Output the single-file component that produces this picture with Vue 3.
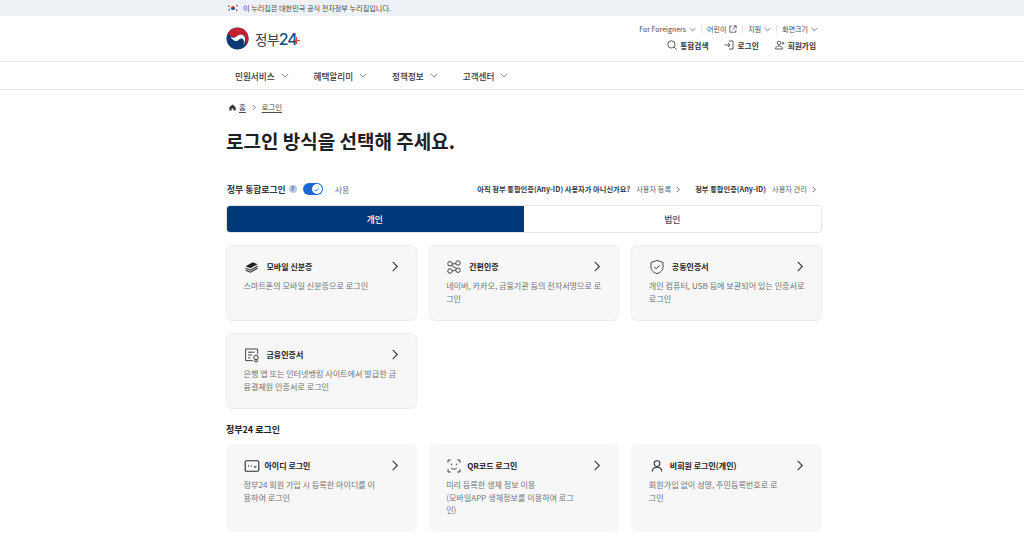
<script setup>
const identityCards = [
  { title: '모바일 신분증', desc: '스마트폰의 모바일 신분증으로 로그인', icon: 'mobile' },
  { title: '간편인증', desc: '네이버, 카카오, 금융기관 등의 전자서명으로 로그인', icon: 'link' },
  { title: '공동인증서', desc: '개인 컴퓨터, USB 등에 보관되어 있는 인증서로 로그인', icon: 'shield' },
  { title: '금융인증서', desc: '은행 앱 또는 인터넷뱅킹 사이트에서 발급한 금융결제원 인증서로 로그인', icon: 'cert' }
]
const g24Cards = [
  { title: '아이디 로그인', desc: '정부24 회원 가입 시 등록한 아이디를 이용하여 로그인', icon: 'id' },
  { title: 'QR코드 로그인', desc: '미리 등록한 생체 정보 이용\n(모바일APP 생체정보를 이용하여 로그인)', icon: 'qr' },
  { title: '비회원 로그인(개인)', desc: '회원가입 없이 성명, 주민등록번호로 로그인', icon: 'user' }
]
const navItems = ['민원서비스', '혜택알리미', '정책정보', '고객센터']
</script>

<template>
  <div class="page">
    <div class="gov-bar">
      <div class="wrap gov-inner">
        <svg class="flag" viewBox="0 0 12 8" width="12" height="8">
          <rect width="12" height="8" fill="#f7f7f7" />
          <path d="M4 4a2 2 0 0 1 4 0z" fill="#cd2e3a" />
          <path d="M4 4a2 2 0 0 0 4 0z" fill="#0047a0" />
          <path d="M1.400 1.200l1.400 1.200M1 2l1.200 1M9.200 1.200L10.600 2.400M9.600 0.900l1.200 1M1.200 6l1.400-1.200M1.700 6.700l1.400-1.200M9.200 5.200l1.400 1.200M8.800 5.800l1.200 1" stroke="#222" stroke-width=".7" />
        </svg>
        <span>이 누리집은 대한민국 공식 전자정부 누리집입니다.</span>
      </div>
    </div>

    <header class="header">
      <div class="wrap header-inner">
        <div class="logo">
          <svg viewBox="0 0 24 24" width="23" height="23">
            <circle cx="12" cy="12" r="11.500" fill="#0b3a74" />
            <path d="M2 6.500A11.500 11.500 0 0 1 23.500 12C23.500 15 22.500 17 21 19C22 14 20 7.800 16 7.500C13 7.300 12 10 9.500 10.500C7 11 4 9 3 7.500Z" fill="#c8202f" />
            <path d="M4.800 10C7 11.800 9.500 11.500 11 10C13 8 15 7.300 17 8C20 9.500 21.500 13.500 18 19C19.500 15.500 18.800 12.800 16.500 12C14.500 11.500 13.500 14 11 14.500C9 15 6 13.500 4.800 10Z" fill="#fff" />
          </svg>
          <span class="logo-ko">정부</span>
          <span class="logo-num">24<svg class="logo-plus" viewBox="0 0 8 8"><path d="M4 0v8M0 4h8" /></svg></span>
        </div>
        <div class="util">
          <div class="util-top">
            <span class="util-item">For Foreigners <svg class="chev" viewBox="0 0 10 6"><path d="M1 1l4 4 4-4" /></svg></span>
            <i class="sep"></i>
            <span class="util-item">어린이
              <svg class="ext" viewBox="0 0 10 10"><path d="M4 1.500H1v7.500h7.500V6M5.500 1h3.500v3.500M9 1L4.500 5.500" /></svg>
            </span>
            <i class="sep"></i>
            <span class="util-item">지원 <svg class="chev" viewBox="0 0 10 6"><path d="M1 1l4 4 4-4" /></svg></span>
            <i class="sep"></i>
            <span class="util-item">화면크기 <svg class="chev" viewBox="0 0 10 6"><path d="M1 1l4 4 4-4" /></svg></span>
          </div>
          <div class="util-bottom">
            <span class="action">
              <svg viewBox="0 0 10 10" width="10" height="10"><circle cx="4.400" cy="4.400" r="3.600" /><path d="M7 7l2.500 2.500" /></svg>통합검색
            </span>
            <span class="action">
              <svg viewBox="0 0 10 10" width="10" height="10"><path d="M0.500 5h5.500M4 3l2 2-2 2M5 1h4v8H5" /></svg>로그인
            </span>
            <span class="action">
              <svg viewBox="0 0 10 10" width="10" height="10"><circle cx="4" cy="3" r="1.800" /><path d="M.5 9c0-2 1.500-3 3.500-3s3.500 1 3.500 3zM8 2v2.500M6.800 3.200h2.500" /></svg>회원가입
            </span>
          </div>
        </div>
      </div>
    </header>

    <nav class="nav">
      <div class="wrap nav-inner">
        <span v-for="item in navItems" :key="item" class="nav-item">
          {{ item }}
          <svg class="nav-chev" viewBox="0 0 10 6"><path d="M1 1l4 4 4-4" /></svg>
        </span>
      </div>
    </nav>

    <main class="wrap main">
      <div class="crumbs">
        <svg viewBox="0 0 10 10" width="7" height="7"><path d="M5 .8L.5 4.800v4.400h3.200V6.500h2.600v2.700h3.200V4.800z" fill="#333" /></svg>
        <span class="crumb">홈</span>
        <svg class="crumb-sep" viewBox="0 0 6 8"><path d="M1.500 1l3 3-3 3" /></svg>
        <span class="crumb">로그인</span>
      </div>

      <h1 class="title">로그인 방식을 선택해 주세요.</h1>

      <div class="opts">
        <div class="opts-left">
          <strong>정부 통합로그인</strong>
          <span class="help">?</span>
          <span class="toggle">
            <span class="knob">
              <svg viewBox="0 0 10 10" width="7" height="7"><path d="M2 5.200l2.200 2.200L8.200 2.800" /></svg>
            </span>
          </span>
          <span class="use">사용</span>
        </div>
        <div class="opts-right">
          <strong>아직 정부 통합인증(Any-ID) 사용자가 아니신가요?</strong>
          <span class="opt-link">사용자 등록 <svg viewBox="0 0 6 8"><path d="M1.500 1l3 3-3 3" /></svg></span>
          <strong class="second">정부 통합인증(Any-ID)</strong>
          <span class="opt-link">사용자 관리 <svg viewBox="0 0 6 8"><path d="M1.500 1l3 3-3 3" /></svg></span>
        </div>
      </div>

      <div class="tabs">
        <div class="tab active">개인</div>
        <div class="tab">법인</div>
      </div>

      <div class="grid">
        <article v-for="c in identityCards" :key="c.title" class="card">
          <div class="card-head">
            <svg class="card-icon" viewBox="0 0 20 20">
              <template v-if="c.icon === 'mobile'">
                <path d="M2 9l9-5 6 2.500-9 5z" fill="#222" stroke="none" />
                <path d="M2 11.500l6 2.500 9-5M2 14l6 2.500 9-5" stroke-width="1.400" />
              </template>
              <template v-else-if="c.icon === 'link'">
                <circle cx="5" cy="6" r="2.800" /><circle cx="15" cy="5" r="2.800" /><circle cx="5" cy="15" r="2.800" /><circle cx="15" cy="14" r="2.800" />
                <path d="M7.800 6h4.400M7.800 15l4.400-1M6.800 8l6.500 4" />
              </template>
              <template v-else-if="c.icon === 'shield'">
                <path d="M10 1.800l7.500 2.500v6c0 4-3.500 6.800-7.500 8-4-1.200-7.500-4-7.500-8v-6z" />
                <path d="M6.500 9.800l2.500 2.500 4.500-4.500" />
              </template>
              <template v-else>
                <path d="M11 17H2V2.500h15V9" />
                <path d="M5 6.500h8M5 10h5M5 13.500h3" />
                <circle cx="15" cy="13" r="2.800" />
                <path d="M13.500 16v2.500h3V16" />
              </template>
            </svg>
            <span class="card-title">{{ c.title }}</span>
            <svg class="card-arrow" viewBox="0 0 8 12"><path d="M1.500 1l5 5-5 5" /></svg>
          </div>
          <p class="card-desc">{{ c.desc }}</p>
        </article>
      </div>

      <h2 class="section">정부24 로그인</h2>

      <div class="grid">
        <article v-for="c in g24Cards" :key="c.title" class="card tall">
          <div class="card-head">
            <svg class="card-icon" viewBox="0 0 20 20">
              <template v-if="c.icon === 'id'">
                <rect x="1.500" y="3.500" width="17" height="13" rx="1.500" stroke-width="1.400" />
                <path d="M5 10h1M8.500 10h1M12.500 11h3" stroke-width="1.600" />
              </template>
              <template v-else-if="c.icon === 'qr'">
                <path d="M6 2.500H2.500V6M14 2.500h3.500V6M2.500 14v3.500H6M17.500 14v3.500H14" />
                <path d="M7 7v2M13 7v2M6.500 12.500c2 2 5 2 7 0" />
              </template>
              <template v-else>
                <circle cx="10" cy="7" r="3.500" stroke-width="1.300" />
                <path d="M4 17c0-3.500 2.500-5.500 6-5.500s6 2 6 5.500" stroke-width="1.300" />
              </template>
            </svg>
            <span class="card-title">{{ c.title }}</span>
            <svg class="card-arrow" viewBox="0 0 8 12"><path d="M1.500 1l5 5-5 5" /></svg>
          </div>
          <p class="card-desc">{{ c.desc }}</p>
        </article>
      </div>
    </main>
  </div>
</template>

<style>
html, body { margin: 0; background: #fff; overflow: hidden; }
</style>

<style scoped>
.page {
  font-family: "Noto Sans CJK KR", "Inter", sans-serif;
  color: #1e2124;
  height: 549px;
  overflow: hidden;
  background: #fff;
}
.wrap { width: 596px; margin-left: 226px; }
.gov-bar { height: 16px; background: #eef2f7; font-size: 7.15px; color: #464c53; }
.gov-inner { display: flex; align-items: center; gap: 4px; height: 16px; padding-left: 1px; box-sizing: border-box; }
.flag { flex: none; }
.header { height: 46px; box-sizing: border-box; border-bottom: 1px solid #ececec; }
.header-inner { display: flex; justify-content: space-between; height: 100%; }
.logo { display: flex; align-items: center; height: 45px; }
.logo-ko { font-size: 13.5px; color: #3c4148; margin-left: 6px; letter-spacing: -.5px; }
.logo-num { position: relative; font-family: "Inter", sans-serif; font-size: 16px; font-weight: 500; color: #14507f; letter-spacing: -1.2px; }
.logo-plus { position: absolute; right: -3px; top: 8px; width: 7px; height: 7px; fill: none; stroke: #e0462f; stroke-width: 1.400; }
.util { display: flex; flex-direction: column; align-items: flex-end; padding-right: 4px; padding-top: 7px; gap: 3px; }
.util-top { display: flex; align-items: center; font-size: 7px; color: #464c53; height: 12px; }
.util-item { display: flex; align-items: center; gap: 3px; white-space: nowrap; }
.sep { width: 1px; height: 8px; background: #dfe2e6; margin: 0 5px; }
.chev { width: 7px; height: 5px; fill: none; stroke: #464c53; stroke-width: 1; }
.ext { width: 8px; height: 8px; fill: none; stroke: #464c53; stroke-width: 1; }
.util-bottom { display: flex; align-items: center; gap: 16px; font-size: 7.7px; font-weight: 700; color: #33363d; height: 14px; padding-right: 2px; }
.action { display: flex; align-items: center; gap: 3px; white-space: nowrap; }
.action svg { fill: none; stroke: #33363d; stroke-width: .8; }
.nav { height: 28px; box-sizing: border-box; border-bottom: 1px solid #e3e3e3; }
.nav-inner { display: flex; align-items: center; height: 100%; padding-left: 9px; box-sizing: border-box; gap: 25px; }
.nav-item { display: flex; align-items: center; gap: 6px; font-size: 8.6px; font-weight: 500; color: #33363d; white-space: nowrap; }
.nav-chev { width: 8px; height: 5px; fill: none; stroke: #58616a; stroke-width: .9; }
.main { padding-top: 11px; }
.crumbs { display: flex; align-items: center; gap: 3px; height: 12px; padding-left: 3px; font-size: 7.3px; color: #464c53; }
.crumb { text-decoration: underline; text-underline-offset: 1.500px; }
.crumb-sep { width: 6px; height: 7px; margin: 0 2px; fill: none; stroke: #464c53; stroke-width: .8; }
.title { margin: 14px 0 0; font-size: 19px; line-height: 28px; font-weight: 700; color: #1e2124; letter-spacing: 0; }
.opts { display: flex; justify-content: space-between; align-items: center; margin-top: 27px; height: 14px; }
.opts-left { display: flex; align-items: center; font-size: 8.8px; padding-left: 1px; }
.opts-left strong { font-weight: 700; color: #33363d; }
.help { width: 8px; height: 8px; margin-left: 3px; border-radius: 50%; background: #b9c9e3; color: #2c5a9c; font-size: 6px; line-height: 8px; text-align: center; font-weight: 700; }
.toggle { display: flex; justify-content: flex-end; align-items: center; margin-left: 6px; width: 20px; height: 12px; padding: 1px; box-sizing: border-box; border-radius: 6px; background: #1a66d6; }
.knob { width: 10px; height: 10px; border-radius: 50%; background: #fff; display: flex; align-items: center; justify-content: center; }
.knob svg { fill: none; stroke: #1a66d6; stroke-width: 1.200; }
.use { margin-left: 12px; font-size: 8px; color: #6d7882; }
.opts-right { display: flex; align-items: center; font-size: 7.25px; padding-right: 5px; white-space: nowrap; }
.opts-right strong { font-weight: 700; color: #33363d; }
.opts-right .second { margin-left: 14px; }
.opt-link { display: flex; align-items: center; gap: 3px; margin-left: 6px; color: #58616a; }
.opt-link svg { width: 6px; height: 7px; margin-left: 1px; fill: none; stroke: #464c53; stroke-width: .9; }
.tabs { display: flex; margin-top: 9px; height: 28px; border: 1px solid #e3e6e8; border-radius: 4px; box-sizing: border-box; overflow: hidden; font-size: 8.8px; }
.tab { flex: 1; display: flex; align-items: center; justify-content: center; color: #464c53; font-weight: 500; }
.tab.active { background: #00397a; color: #fff; margin: -1px 0 -1px -1px; }
.grid { display: grid; grid-template-columns: repeat(3, 1fr); gap: 12px; margin-top: 12px; }
.card { height: 76px; box-sizing: border-box; padding: 13px 14px 0 16.500px; background: #f7f7f7; border: 1px solid #eeeeee; border-radius: 6px; }
.card.tall { height: 88px; border-color: #f7f7f7; }
.card.tall .card-desc { padding-right: 24.500px; }
.card.tall .card-icon { margin-right: 5px; }
.card-head { display: flex; align-items: center; height: 15px; margin-right: 3px; }
.card-icon { flex: none; width: 16px; height: 16px; margin-right: 7px; fill: none; stroke: #2a2d33; stroke-width: 1.100; }
.card-title { flex: 1; font-size: 8px; font-weight: 700; color: #1e2124; white-space: nowrap; }
.card-arrow { flex: none; width: 8px; height: 11px; fill: none; stroke: #33363d; stroke-width: 1.200; }
.card-desc { margin: 6px 0 0; font-size: 8.1px; line-height: 12.500px; color: #707478; white-space: pre-line; word-break: break-all; }
.section { margin: 14px 0 0; font-size: 9px; line-height: 14px; font-weight: 700; color: #1e2124; }
.section + .grid { margin-top: 7px; }
</style>
